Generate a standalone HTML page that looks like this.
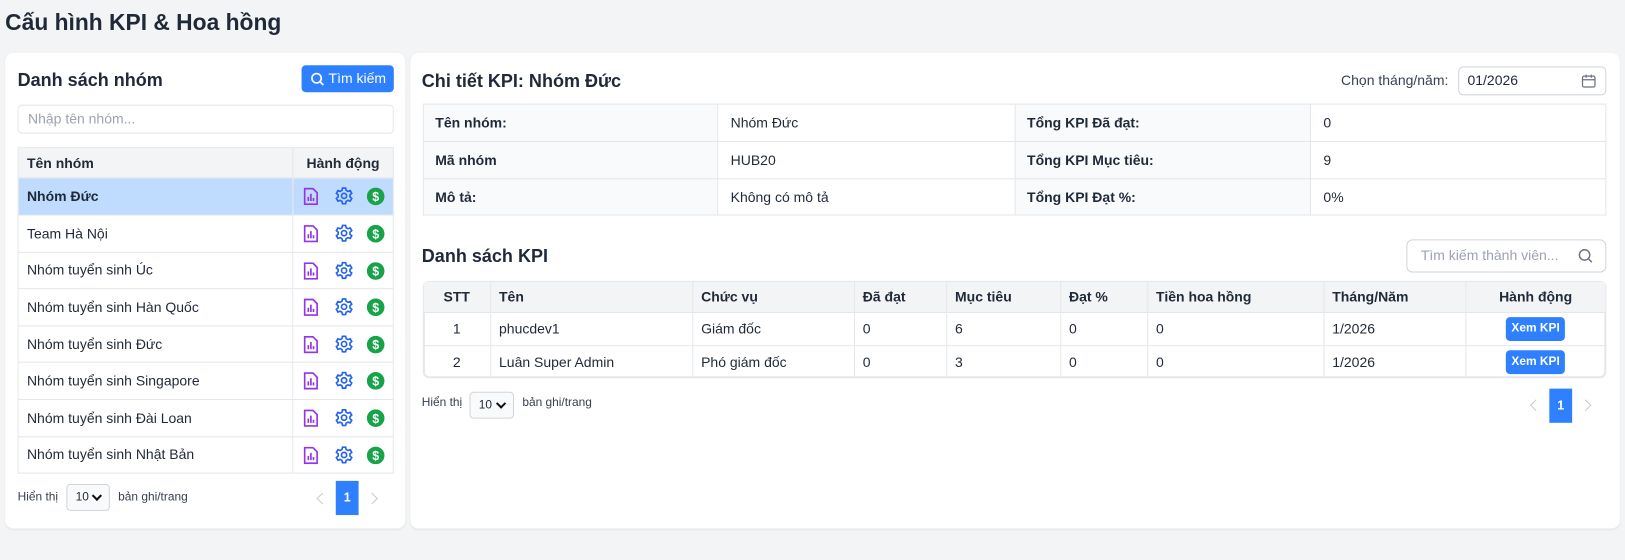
<!DOCTYPE html>
<html><head><meta charset="utf-8"><style>
*{box-sizing:border-box;margin:0;padding:0}
html,body{width:1625px;height:559px;overflow:hidden}
body{background:#f3f4f6;font-family:"Liberation Sans",Arial,sans-serif;color:#1f2937;font-size:13.5px}
#root{position:absolute;left:0;top:0;width:1568px;height:540px;transform:scale(1.03635);transform-origin:0 0}
.abs{position:absolute}
h1{position:absolute;left:5px;top:9px;font-size:22px;font-weight:bold;color:#1f2937}
.panel{position:absolute;background:#fff;border-radius:8px;box-shadow:0 1px 2px rgba(0,0,0,.06)}
.h2{position:absolute;font-size:17.4px;font-weight:bold;color:#1f2937}
table{border-collapse:collapse;position:absolute}
td,th{border:1px solid #e5e7eb;font-size:13.5px;text-align:left}
th{background:#f3f4f6;font-weight:bold}
.sel{position:absolute;border:1px solid #d1d5db;border-radius:4px;font-size:11.5px;padding-left:8px;line-height:24px;background:#f9fafb}
.sel:after{content:"";position:absolute;right:8px;top:7px;width:5px;height:5px;border-right:2px solid #111;border-bottom:2px solid #111;transform:rotate(45deg)}
.small{position:absolute;font-size:11.5px;color:#374151}
.pg{position:absolute;background:#2f80ff;color:#fff;font-size:12px;font-weight:bold;text-align:center;width:22px;height:33px;line-height:33px}
.ch{position:absolute;width:8px;height:8px;border-left:1.5px solid #c7cbd1;border-bottom:1.5px solid #c7cbd1}
.btnx{display:inline-block;background:#2f80ff;color:#fff;font-size:11.5px;font-weight:bold;border-radius:4px;padding:0 5px;line-height:23px}
</style></head><body>
<div id="root">
<h1>Cấu hình KPI &amp; Hoa hồng</h1>

<div class="panel" style="left:5px;top:51px;width:386px;height:459px"></div>
<div class="h2" style="left:17px;top:67px">Danh sách nhóm</div>
<div class="abs" style="left:291px;top:63px;width:89px;height:26px;background:#2f80ff;border-radius:4px;color:#fff;font-size:13.5px;line-height:26px;padding-left:26px">Tìm kiếm
<svg style="position:absolute;left:9px;top:7px" width="13" height="13" viewBox="0 0 13 13" fill="none" stroke="#fff" stroke-width="1.6"><circle cx="5.5" cy="5.5" r="4.5"/><path d="M9 9l3 3"/></svg></div>
<div class="abs" style="left:17px;top:101px;width:363px;height:28px;border:1px solid #e5e7eb;border-radius:4px;font-size:13.5px;color:#9ca3af;line-height:26px;padding-left:9px">Nhập tên nhóm...</div>

<table style="left:17px;top:142px;width:363px">
<tr style="height:29px"><th style="padding-left:8px;width:265px">Tên nhóm</th><th style="text-align:center">Hành động</th></tr>
<tbody id="lb"></tbody>
</table>

<div class="small" style="left:17px;top:474px">Hiển thị</div>
<div class="sel" style="left:64px;top:467px;width:42px;height:26px">10</div>
<div class="small" style="left:114px;top:474px">bản ghi/trang</div>
<div class="ch" style="left:307px;top:477px;transform:rotate(45deg)"></div>
<div class="pg" style="left:324px;top:464px">1</div>
<div class="ch" style="left:355px;top:477px;transform:rotate(-135deg)"></div>

<div class="panel" style="left:396px;top:51px;width:1167px;height:459px"></div>
<div class="h2" style="left:407px;top:68px">Chi tiết KPI: Nhóm Đức</div>
<div class="abs" style="left:1294px;top:70px;font-size:13.5px;color:#374151">Chọn tháng/năm:</div>
<div class="abs" style="left:1407px;top:64px;width:143px;height:28px;border:1px solid #d1d5db;border-radius:5px;font-size:13.5px;line-height:26px;padding-left:8px">01/2026
<svg style="position:absolute;right:9px;top:6px" width="14" height="14" viewBox="0 0 14 14" fill="none" stroke="#6b7280" stroke-width="1.2"><rect x="1" y="2.5" width="12" height="10.5" rx="1.5"/><path d="M1 6h12M4.5 1v3M9.5 1v3"/></svg></div>

<table style="left:408px;top:100px;width:1142px">
<tr style="height:36px"><td style="width:284px;background:#f9fafb;font-weight:bold;padding-left:11px">Tên nhóm:</td><td style="width:287px;padding-left:12px">Nhóm Đức</td><td style="width:285px;background:#f9fafb;font-weight:bold;padding-left:11px">Tổng KPI Đã đạt:</td><td style="padding-left:12px">0</td></tr>
<tr style="height:36px"><td style="background:#f9fafb;font-weight:bold;padding-left:11px">Mã nhóm</td><td style="padding-left:12px">HUB20</td><td style="background:#f9fafb;font-weight:bold;padding-left:11px">Tổng KPI Mục tiêu:</td><td style="padding-left:12px">9</td></tr>
<tr style="height:35px"><td style="background:#f9fafb;font-weight:bold;padding-left:11px">Mô tả:</td><td style="padding-left:12px">Không có mô tả</td><td style="background:#f9fafb;font-weight:bold;padding-left:11px">Tổng KPI Đạt %:</td><td style="padding-left:12px">0%</td></tr>
</table>

<div class="h2" style="left:407px;top:237px">Danh sách KPI</div>
<div class="abs" style="left:1357px;top:231px;width:193px;height:32px;border:1px solid #d1d5db;border-radius:6px;font-size:13.5px;color:#9ca3af;line-height:30px;padding-left:13px">Tìm kiếm thành viên...
<svg style="position:absolute;right:12px;top:8px" width="14" height="14" viewBox="0 0 14 14" fill="none" stroke="#6b7280" stroke-width="1.4"><circle cx="6" cy="6" r="5"/><path d="M10 10l3 3"/></svg></div>

<div class="abs" style="left:408px;top:271px;width:1142px;height:94px;border:2px solid #e5e7eb;border-radius:6px"></div>
<table style="left:409px;top:272px;width:1140px">
<tr style="height:29px"><th style="width:64px;text-align:center;border-top:none;border-left:none">STT</th><th style="width:195px;padding-left:8px;border-top:none">Tên</th><th style="width:156px;padding-left:8px;border-top:none">Chức vụ</th><th style="width:89px;padding-left:8px;border-top:none">Đã đạt</th><th style="width:110px;padding-left:8px;border-top:none">Mục tiêu</th><th style="width:84px;padding-left:8px;border-top:none">Đạt %</th><th style="width:170px;padding-left:8px;border-top:none">Tiền hoa hồng</th><th style="width:137px;padding-left:8px;border-top:none">Tháng/Năm</th><th style="text-align:center;border-top:none;border-right:none">Hành động</th></tr>
<tr style="height:32px"><td style="text-align:center;border-left:none">1</td><td style="padding-left:8px">phucdev1</td><td style="padding-left:8px">Giám đốc</td><td style="padding-left:8px">0</td><td style="padding-left:8px">6</td><td style="padding-left:8px">0</td><td style="padding-left:8px">0</td><td style="padding-left:8px">1/2026</td><td style="text-align:center;border-right:none"><span class="btnx">Xem KPI</span></td></tr>
<tr style="height:32px"><td style="text-align:center;border-left:none;border-bottom:none">2</td><td style="padding-left:8px;border-bottom:none">Luân Super Admin</td><td style="padding-left:8px;border-bottom:none">Phó giám đốc</td><td style="padding-left:8px;border-bottom:none">0</td><td style="padding-left:8px;border-bottom:none">3</td><td style="padding-left:8px;border-bottom:none">0</td><td style="padding-left:8px;border-bottom:none">0</td><td style="padding-left:8px;border-bottom:none">1/2026</td><td style="text-align:center;border-right:none;border-bottom:none"><span class="btnx">Xem KPI</span></td></tr>
</table>

<div class="small" style="left:407px;top:383px">Hiển thị</div>
<div class="sel" style="left:453px;top:378px;width:43px;height:26px">10</div>
<div class="small" style="left:504px;top:383px">bản ghi/trang</div>
<div class="ch" style="left:1478px;top:387px;transform:rotate(45deg)"></div>
<div class="pg" style="left:1495px;top:375px">1</div>
<div class="ch" style="left:1526px;top:387px;transform:rotate(-135deg)"></div>
</div>

<script>
var names=["Nhóm Đức","Team Hà Nội","Nhóm tuyển sinh Úc","Nhóm tuyển sinh Hàn Quốc","Nhóm tuyển sinh Đức","Nhóm tuyển sinh Singapore","Nhóm tuyển sinh Đài Loan","Nhóm tuyển sinh Nhật Bản"];
var ic='<svg width="16" height="17" viewBox="0 0 16 17" style="position:absolute;left:9px;top:9px" fill="none" stroke-width="1.6"><path d="M2 1h8l4 4v11H2z" stroke="#9333ea"/><path d="M5.5 13V9M8 13V6M10.5 13v-3" stroke="#9333ea"/></svg>'+
'<svg width="18" height="18" viewBox="0 0 18 18" style="position:absolute;left:40px;top:8px" fill="none" stroke="#2563eb" stroke-width="1.6"><path d="M7.5 1.5h3l.5 2.2 1.8 1 2.1-.8 1.5 2.6-1.7 1.5v2l1.7 1.5-1.5 2.6-2.1-.8-1.8 1-.5 2.2h-3l-.5-2.2-1.8-1-2.1.8L1.6 11.5 3.3 10V8L1.6 6.5 3.1 3.9l2.1.8 1.8-1z"/><circle cx="9" cy="9" r="2.5"/></svg>'+
'<svg width="17" height="17" viewBox="0 0 17 17" style="position:absolute;left:71px;top:9px"><circle cx="8.5" cy="8.5" r="8.5" fill="#16a34a"/><text x="8.5" y="13" text-anchor="middle" font-size="12" font-weight="bold" fill="#fff" font-family="Liberation Sans">$</text></svg>';
var h="";names.forEach(function(n,i){var bg=i==0?"background:#bfdbfe;":"";h+='<tr style="height:'+(i==0?36:35.6)+'px;'+bg+'"><td style="padding-left:8px;'+(i==0?'font-weight:bold':'')+'">'+n+'</td><td style="position:relative">'+ic+'</td></tr>';});
document.getElementById("lb").innerHTML=h;
</script>
</body></html>
